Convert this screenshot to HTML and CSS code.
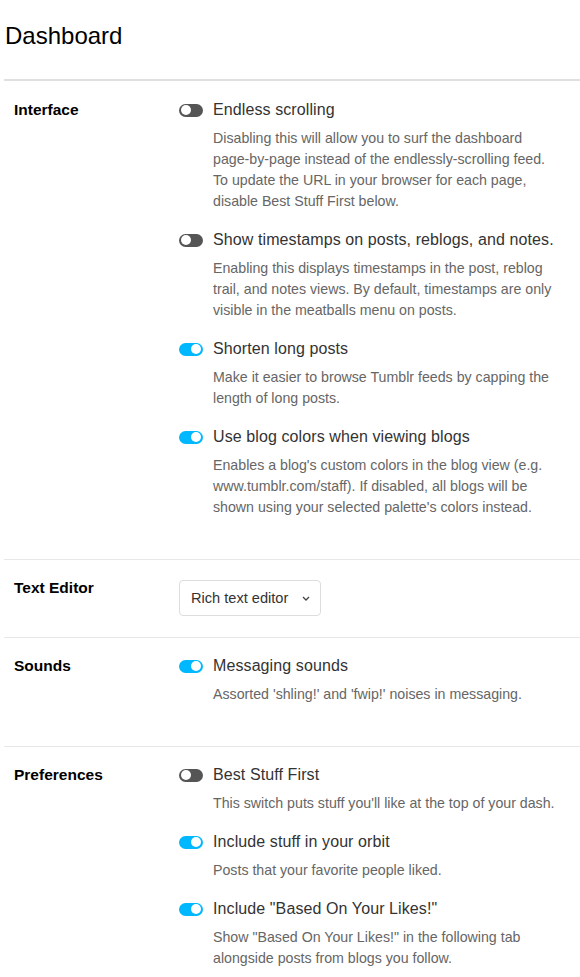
FILE: index.html
```html
<!DOCTYPE html>
<html>
<head>
<meta charset="utf-8">
<link rel="stylesheet" href="styles.css">
</head>
<body>
<div class="page">
  <h1 class="page-title">Dashboard</h1>
  <div class="sections">
    <section class="section section-first">
      <div class="label">Interface</div>
      <div class="items">
        <div class="item">
          <div class="item-head"><span class="toggle"></span><span class="item-title">Endless scrolling</span></div>
          <p class="desc">Disabling this will allow you to surf the dashboard page-by-page instead of the endlessly-scrolling feed. To update the URL in your browser for each page, disable Best Stuff First below.</p>
        </div>
        <div class="item">
          <div class="item-head"><span class="toggle"></span><span class="item-title">Show timestamps on posts, reblogs, and notes.</span></div>
          <p class="desc">Enabling this displays timestamps in the post, reblog trail, and notes views. By default, timestamps are only visible in the meatballs menu on posts.</p>
        </div>
        <div class="item">
          <div class="item-head"><span class="toggle on"></span><span class="item-title">Shorten long posts</span></div>
          <p class="desc">Make it easier to browse Tumblr feeds by capping the length of long posts.</p>
        </div>
        <div class="item">
          <div class="item-head"><span class="toggle on"></span><span class="item-title">Use blog colors when viewing blogs</span></div>
          <p class="desc">Enables a blog's custom colors in the blog view (e.g. www.tumblr.com/staff). If disabled, all blogs will be shown using your selected palette's colors instead.</p>
        </div>
      </div>
    </section>
    <section class="section section-select">
      <div class="label">Text Editor</div>
      <div class="items">
        <div class="select"><span>Rich text editor</span><svg class="chev" width="8" height="5" viewBox="0 0 8 5"><path d="M1 1l3 3 3-3" fill="none" stroke="#444" stroke-width="1.3"/></svg></div>
      </div>
    </section>
    <section class="section">
      <div class="label">Sounds</div>
      <div class="items">
        <div class="item">
          <div class="item-head"><span class="toggle on"></span><span class="item-title">Messaging sounds</span></div>
          <p class="desc">Assorted 'shling!' and 'fwip!' noises in messaging.</p>
        </div>
      </div>
    </section>
    <section class="section">
      <div class="label">Preferences</div>
      <div class="items">
        <div class="item">
          <div class="item-head"><span class="toggle"></span><span class="item-title">Best Stuff First</span></div>
          <p class="desc">This switch puts stuff you'll like at the top of your dash.</p>
        </div>
        <div class="item">
          <div class="item-head"><span class="toggle on"></span><span class="item-title">Include stuff in your orbit</span></div>
          <p class="desc">Posts that your favorite people liked.</p>
        </div>
        <div class="item">
          <div class="item-head"><span class="toggle on"></span><span class="item-title">Include "Based On Your Likes!"</span></div>
          <p class="desc">Show "Based On Your Likes!" in the following tab alongside posts from blogs you follow.</p>
        </div>
      </div>
    </section>
  </div>
</div>
</body>
</html>
```
FILE: styles.css
```css
html, body {
  margin: 0;
  padding: 0;
  background: #fff;
}
body {
  font-family: "Liberation Sans", Arial, sans-serif;
  color: #333;
}
.page {
  padding: 0 0 0 4px;
}
.page-title {
  margin: 0;
  padding: 22px 0 0 1px;
  box-sizing: border-box;
  height: 81px;
  font-size: 24px;
  line-height: 28px;
  font-weight: 400;
  color: #000;
  border-bottom: 2px solid #e0e0e0;
}
.section {
  display: grid;
  grid-template-columns: 165px 1fr;
  padding: 17px 0 24px 10px;
  border-bottom: 1px solid #e8e8e8;
}
.section-first {
  padding-top: 18px;
}
.section-select {
  padding: 17px 0 21px 10px;
}
.label {
  font-size: 15.5px;
  font-weight: 700;
  line-height: 22px;
  color: #000;
}
.item {
  margin-bottom: 17px;
}
.item-head {
  display: flex;
  align-items: center;
  gap: 10px;
  height: 22px;
}
.toggle {
  position: relative;
  width: 24px;
  height: 13px;
  border-radius: 7px;
  background: #555;
  flex: none;
}
.toggle::after {
  content: "";
  position: absolute;
  top: 1.5px;
  left: 2px;
  width: 10px;
  height: 10px;
  border-radius: 50%;
  background: #fff;
}
.toggle.on {
  background: #00b8ff;
}
.toggle.on::after {
  left: 12px;
}
.item-title {
  font-size: 16px;
  letter-spacing: 0.1px;
  line-height: 22px;
  color: #333;
}
.desc {
  margin: 7px 0 0 34px;
  font-size: 14.2px;
  line-height: 21px;
  color: #666;
  max-width: 342px;
}
.select {
  margin-top: 3px;
  width: 142px;
  height: 36px;
  box-sizing: border-box;
  border: 1px solid #ddd;
  border-radius: 4px;
  display: flex;
  align-items: center;
  justify-content: space-between;
  padding: 0 10px 0 11px;
  font-size: 14.6px;
  color: #333;
}
.chev {
  display: block;
}
```
